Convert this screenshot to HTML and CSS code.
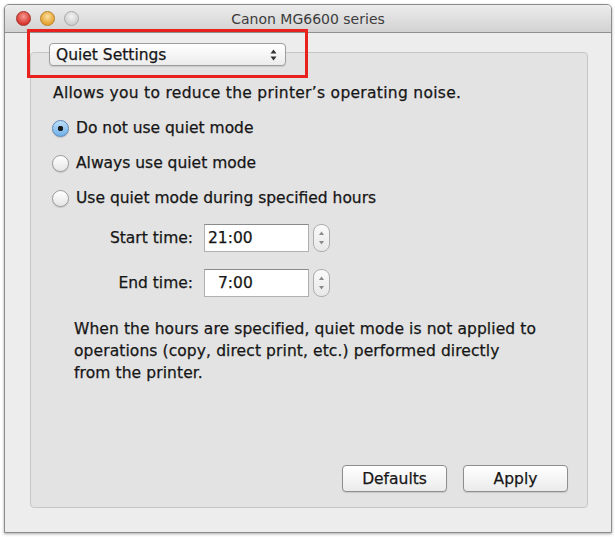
FILE: index.html
```html
<!DOCTYPE html>
<html lang="en">
<head>
    <meta charset="UTF-8">
    <meta name="viewport" content="width=device-width, initial-scale=1.0">
    <title>Canon MG6600 series</title>
    <link rel="stylesheet" href="styles.css">
</head>
<body>
    <div class="window">
        <div class="titlebar">
            <div class="lights">
                <span class="light close"></span>
                <span class="light minimize"></span>
                <span class="light zoom"></span>
            </div>
            <div class="title">Canon MG6600 series</div>
            <div></div>
        </div>

        <div class="content">
            <div class="group">
                <div class="highlight">
                    <div class="popup">
                        <span>Quiet Settings</span>
                        <svg width="7" height="12" viewBox="0 0 7 12">
                            <path d="M0.5 4.5 L3.5 0.5 L6.5 4.5 Z" fill="#333"/>
                            <path d="M0.5 7.5 L3.5 11.5 L6.5 7.5 Z" fill="#333"/>
                        </svg>
                    </div>
                </div>

                <div class="options">
                    <p class="intro">Allows you to reduce the printer’s operating noise.</p>

                    <label class="radio">
                        <span class="dot checked"></span>
                        Do not use quiet mode
                    </label>
                    <label class="radio">
                        <span class="dot"></span>
                        Always use quiet mode
                    </label>
                    <label class="radio">
                        <span class="dot"></span>
                        Use quiet mode during specified hours
                    </label>

                    <div class="time-row">
                        <span class="time-label">Start time:</span>
                        <div class="time-field">21:00</div>
                        <span class="stepper">
                            <svg width="7" height="16" viewBox="0 0 7 16">
                                <path d="M1 5 L3.5 1.5 L6 5 Z" fill="#8a8a8a"/>
                                <path d="M1 11 L3.5 14.5 L6 11 Z" fill="#8a8a8a"/>
                            </svg>
                        </span>
                    </div>
                    <div class="time-row">
                        <span class="time-label">End time:</span>
                        <div class="time-field short">7:00</div>
                        <span class="stepper">
                            <svg width="7" height="16" viewBox="0 0 7 16">
                                <path d="M1 5 L3.5 1.5 L6 5 Z" fill="#8a8a8a"/>
                                <path d="M1 11 L3.5 14.5 L6 11 Z" fill="#8a8a8a"/>
                            </svg>
                        </span>
                    </div>
                </div>

                <p class="note">
                    When the hours are specified, quiet mode is not applied to<br>
                    operations (copy, direct print, etc.) performed directly<br>
                    from the printer.
                </p>

                <div class="buttons">
                    <button class="btn">Defaults</button>
                    <button class="btn">Apply</button>
                </div>
            </div>
        </div>
    </div>
</body>
</html>
```

FILE: styles.css
```css
body {
    margin: 0;
    padding: 4px 3px 4px 4px;
    background-color: #ffffff;
    font-family: "DejaVu Sans", sans-serif;
    color: #161616;
}

.window {
    width: 606px;
    height: 527px;
    display: flex;
    flex-direction: column;
    background-color: #ededed;
    border: 1px solid #8c8c8c;
    border-radius: 5px 5px 0 0;
    box-shadow: 0 1px 3px rgba(0, 0, 0, 0.35);
}

/* title bar */

.titlebar {
    height: 27px;
    display: grid;
    grid-template-columns: 1fr auto 1fr;
    align-items: center;
    background: linear-gradient(#ececec, #d2d2d2);
    border-bottom: 1px solid #8f8f8f;
    border-radius: 4px 4px 0 0;
}

.lights {
    display: flex;
    gap: 9px;
    padding-left: 11px;
}

.light {
    width: 15px;
    height: 15px;
    border-radius: 50%;
    box-sizing: border-box;
}

.close {
    background: radial-gradient(circle at 50% 35%, #f59a94, #d8352c 70%);
    border: 1px solid #a3322a;
}

.minimize {
    background: radial-gradient(circle at 50% 35%, #fbe0a0, #e5a332 70%);
    border: 1px solid #b78126;
}

.zoom {
    background: radial-gradient(circle at 50% 35%, #f4f4f4, #cfcfcf 70%);
    border: 1px solid #a9a9a9;
}

.title {
    font-size: 14px;
    color: #3c3c3c;
}

/* content */

.content {
    flex: 1;
    display: flex;
    padding: 19px 23px 24px 25px;
}

.group {
    flex: 1;
    display: flex;
    flex-direction: column;
    background-color: #e3e3e3;
    border: 1px solid #c6c6c6;
    border-radius: 4px;
    padding: 0 19px 15px 22px;
    font-size: 15.5px;
    -webkit-text-stroke: 0.25px #161616;
}

.highlight {
    align-self: flex-start;
    margin: -24px 0 0 -26px;
    padding: 11px 19px 9px 19px;
    border: 3px solid #e8231f;
}

.popup {
    width: 237px;
    height: 23px;
    box-sizing: border-box;
    display: flex;
    align-items: center;
    justify-content: space-between;
    padding: 0 8px 0 6px;
    background: linear-gradient(#ffffff, #ececec);
    border: 1px solid #9d9d9d;
    border-radius: 4px;
    box-shadow: 0 1px 1px rgba(0, 0, 0, 0.12);
}

.options {
    display: flex;
    flex-direction: column;
    gap: 17px;
    margin-top: 6px;
}

.intro {
    margin: 0;
    line-height: 18px;
    letter-spacing: 0.3px;
}

.radio {
    display: flex;
    align-items: center;
    height: 18px;
    gap: 7px;
    margin-left: -1px;
}

.dot {
    width: 17px;
    height: 17px;
    box-sizing: border-box;
    border-radius: 50%;
    border: 1px solid #9b9b9b;
    background: linear-gradient(#ffffff, #e6e6e6);
    box-shadow: 0 1px 1px rgba(0, 0, 0, 0.15);
}

.dot.checked {
    border-color: #5a86b8;
    background: radial-gradient(circle, #1c1c1c 0 2.5px, transparent 3px),
        linear-gradient(#bfe0fa, #6fb0e8);
}

.time-row {
    display: flex;
    align-items: center;
    height: 28px;
}

.time-label {
    width: 140px;
    margin-right: 11px;
    text-align: right;
}

.time-field {
    width: 105px;
    height: 28px;
    box-sizing: border-box;
    padding-left: 3px;
    line-height: 26px;
    background-color: #ffffff;
    border: 1px solid #b0b0b0;
    border-top-color: #8a8a8a;
}

.time-field.short {
    padding-left: 13px;
}

.stepper {
    width: 17px;
    height: 28px;
    margin-left: 4px;
    box-sizing: border-box;
    display: flex;
    align-items: center;
    justify-content: center;
    border: 1px solid #adadad;
    border-radius: 8px;
    background: linear-gradient(#fafafa, #e8e8e8);
}

.note {
    margin: 21px 0 0 21px;
    line-height: 22px;
    letter-spacing: 0.1px;
}

.buttons {
    margin-top: auto;
    display: flex;
    justify-content: flex-end;
    gap: 16px;
}

.btn {
    width: 105px;
    height: 27px;
    font-family: "DejaVu Sans", sans-serif;
    font-size: 15.5px;
    color: #161616;
    -webkit-text-stroke: 0.25px #161616;
    background: linear-gradient(#ffffff, #ebebeb);
    border: 1px solid #8e8e8e;
    border-radius: 4px;
    box-shadow: 0 1px 1px rgba(0, 0, 0, 0.12);
    padding: 0;
}
```
